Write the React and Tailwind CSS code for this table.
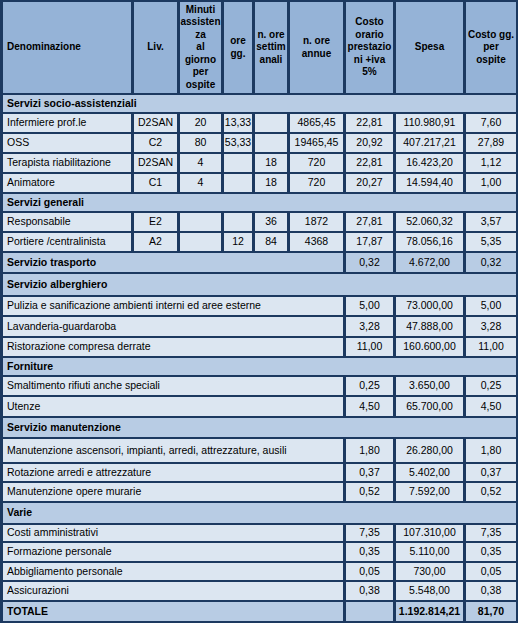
const B = "border-x-[3px] border-y-2 border-[#1c3960]";
const HEAD = `${B} bg-[#95b3d7] font-bold text-center align-middle`;
const SEC = `${B} bg-[#b8cce4]`;
const DATA = `${B} bg-[#dce6f1]`;

// full rows: all nine columns filled
const staff = [
  { label: "Infermiere prof.le", h: "h-[20px]", v: ["D2SAN", "20", "13,33", "", "4865,45", "22,81", "110.980,91", "7,60"] },
  { label: "OSS", h: "h-[20px]", v: ["C2", "80", "53,33", "", "19465,45", "20,92", "407.217,21", "27,89"] },
  { label: "Terapista riabilitazione", h: "h-[20px]", v: ["D2SAN", "4", "", "18", "720", "22,81", "16.423,20", "1,12"] },
  { label: "Animatore", h: "h-[20px]", v: ["C1", "4", "", "18", "720", "20,27", "14.594,40", "1,00"] },
];

const general = [
  { label: "Responsabile", h: "h-[20px]", v: ["E2", "", "", "36", "1872", "27,81", "52.060,32", "3,57"] },
  { label: "Portiere /centralinista", h: "h-[20px]", v: ["A2", "", "12", "84", "4368", "17,87", "78.056,16", "5,35"] },
];

const groups = [
  {
    title: "Servizio alberghiero",
    h: "h-[23px]",
    items: [
      { label: "Pulizia e sanificazione ambienti interni ed aree esterne", h: "h-[20px]", v: ["5,00", "73.000,00", "5,00"] },
      { label: "Lavanderia-guardaroba", h: "h-[21px]", v: ["3,28", "47.888,00", "3,28"] },
      { label: "Ristorazione compresa derrate", h: "h-[20px]", v: ["11,00", "160.600,00", "11,00"] },
    ],
  },
  {
    title: "Forniture",
    h: "h-[19px]",
    items: [
      { label: "Smaltimento rifiuti anche speciali", h: "h-[20px]", v: ["0,25", "3.650,00", "0,25"] },
      { label: "Utenze", h: "h-[21px]", v: ["4,50", "65.700,00", "4,50"] },
    ],
  },
  {
    title: "Servizio manutenzione",
    h: "h-[21px]",
    items: [
      { label: "Manutenzione ascensori, impianti, arredi, attrezzature, ausili", h: "h-[25px]", v: ["1,80", "26.280,00", "1,80"] },
      { label: "Rotazione arredi e attrezzature", h: "h-[19px]", v: ["0,37", "5.402,00", "0,37"] },
      { label: "Manutenzione opere murarie", h: "h-[20px]", v: ["0,52", "7.592,00", "0,52"] },
    ],
  },
  {
    title: "Varie",
    h: "h-[22px]",
    items: [
      { label: "Costi amministrativi", h: "h-[18px]", v: ["7,35", "107.310,00", "7,35"] },
      { label: "Formazione personale", h: "h-[20px]", v: ["0,35", "5.110,00", "0,35"] },
      { label: "Abbigliamento personale", h: "h-[19px]", v: ["0,05", "730,00", "0,05"] },
      { label: "Assicurazioni", h: "h-[20px]", v: ["0,38", "5.548,00", "0,38"] },
    ],
  },
];

const SectionRow = ({ title, h }) => (
  <tr className={h}>
    <td colSpan={9} className={`${SEC} px-1 font-bold`}>{title}</td>
  </tr>
);

const FullRow = ({ label, h, v }) => (
  <tr className={h}>
    <td className={`${DATA} px-1 whitespace-nowrap`}>{label}</td>
    {v.map((x, i) => (
      <td key={i} className={`${DATA} text-center whitespace-nowrap`}>{x}</td>
    ))}
  </tr>
);

const CostRow = ({ label, h, v }) => (
  <tr className={h}>
    <td colSpan={6} className={`${DATA} px-1 whitespace-nowrap`}>{label}</td>
    {v.map((x, i) => (
      <td key={i} className={`${DATA} text-center whitespace-nowrap`}>{x}</td>
    ))}
  </tr>
);

export default function App() {
  return (
    <div className="w-[518px] bg-white font-['Liberation_Sans',Arial,sans-serif] text-[10.5px] text-black">
      <table className="w-[518px] table-fixed border-collapse border-2 border-[#1c3960]">
        <colgroup>
          <col className="w-[131px]" />
          <col className="w-[46px]" />
          <col className="w-[44px]" />
          <col className="w-[31px]" />
          <col className="w-[35px]" />
          <col className="w-[56px]" />
          <col className="w-[50px]" />
          <col className="w-[70px]" />
          <col className="w-[53px]" />
        </colgroup>
        <thead className="text-[10px] leading-[12.5px]">
          <tr className="h-[93px]">
            <th className={`${HEAD} text-left px-1`}>Denominazione</th>
            <th className={HEAD}>Liv.</th>
            <th className={`${HEAD} border-l-white`}>
              Minuti<br />assisten<br />za<br />al<br />giorno<br />per<br />ospite
            </th>
            <th className={HEAD}>ore<br />gg.</th>
            <th className={HEAD}>n. ore<br />settim<br />anali</th>
            <th className={HEAD}>n. ore<br />annue</th>
            <th className={HEAD}>Costo<br />orario<br />prestazio<br />ni +iva<br />5%</th>
            <th className={HEAD}>Spesa</th>
            <th className={`${HEAD} whitespace-nowrap`}>Costo gg.<br />per<br />ospite</th>
          </tr>
        </thead>
        <tbody>
          <SectionRow title="Servizi socio-assistenziali" h="h-[19px]" />
          {staff.map((r) => (
            <FullRow key={r.label} {...r} />
          ))}
          <SectionRow title="Servizi generali" h="h-[19px]" />
          {general.map((r) => (
            <FullRow key={r.label} {...r} />
          ))}
          <tr className="h-[21px]">
            <td colSpan={6} className={`${SEC} px-1 font-bold`}>Servizio trasporto</td>
            <td className={`${SEC} text-center`}>0,32</td>
            <td className={`${SEC} text-center`}>4.672,00</td>
            <td className={`${SEC} text-center`}>0,32</td>
          </tr>
          {groups.map((g) => (
            <>
              <SectionRow key={g.title} title={g.title} h={g.h} />
              {g.items.map((r) => (
                <CostRow key={r.label} {...r} />
              ))}
            </>
          ))}
          <tr className="h-[21px] font-bold">
            <td colSpan={6} className={`${SEC} px-1`}>TOTALE</td>
            <td className={SEC}></td>
            <td className={`${SEC} text-center whitespace-nowrap`}>1.192.814,21</td>
            <td className={`${SEC} text-center`}>81,70</td>
          </tr>
        </tbody>
      </table>
    </div>
  );
}
